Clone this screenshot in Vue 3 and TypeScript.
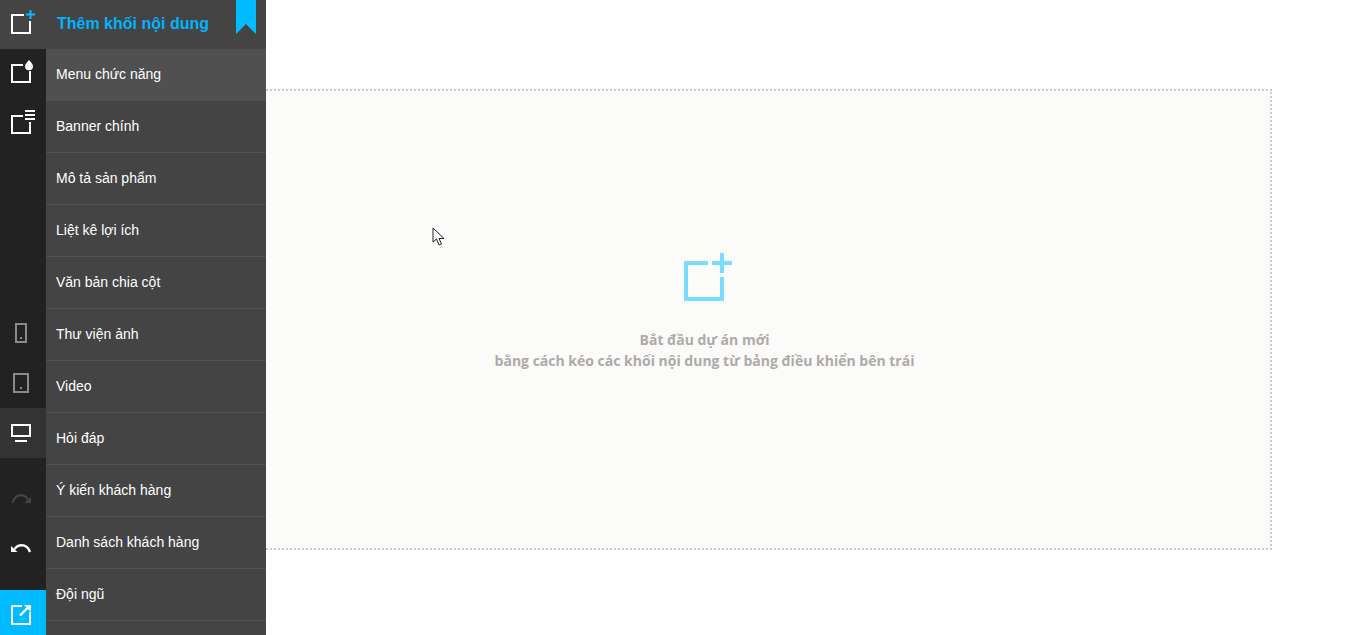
<script setup lang="ts">
const items: string[] = [
  'Menu chức năng',
  'Banner chính',
  'Mô tả sản phẩm',
  'Liệt kê lợi ích',
  'Văn bản chia cột',
  'Thư viện ảnh',
  'Video',
  'Hỏi đáp',
  'Ý kiến khách hàng',
  'Danh sách khách hàng',
  'Đội ngũ',
]
</script>

<template>
  <div class="app">
    <nav class="rail">
      <button class="rail-btn head">
        <svg width="46" height="49" viewBox="0 0 46 49" fill="none">
          <path d="M24 15H12V33H30V21" stroke="#fff" stroke-width="2" />
          <path d="M26 14.5H35M30.5 10V19" stroke="#00bbff" stroke-width="2" />
        </svg>
      </button>
      <button class="rail-btn">
        <svg width="46" height="50" viewBox="0 0 46 50" fill="none">
          <path d="M23 16H12V33H30V22" stroke="#fff" stroke-width="2" />
          <path d="M29 11C28 12.8 25 14.6 25 17.2A4 4 0 0 0 33 17.2C33 14.6 30 12.8 29 11Z" fill="#fff" />
        </svg>
      </button>
      <button class="rail-btn">
        <svg width="46" height="50" viewBox="0 0 46 50" fill="none">
          <path d="M23 17H12V34H30V23" stroke="#fff" stroke-width="2" />
          <path d="M25 12H35M25 16H35M25 20H35" stroke="#fff" stroke-width="2" />
        </svg>
      </button>

      <div class="device-group">
        <button class="rail-btn">
          <svg width="46" height="50" viewBox="0 0 46 50" fill="none">
            <rect x="16" y="16" width="10" height="18" stroke="#8a8a8a" stroke-width="2" />
            <rect x="20" y="29" width="2" height="2" fill="#8a8a8a" />
          </svg>
        </button>
        <button class="rail-btn">
          <svg width="46" height="50" viewBox="0 0 46 50" fill="none">
            <rect x="14" y="16" width="14" height="18" stroke="#8a8a8a" stroke-width="2" />
            <rect x="20" y="29" width="2" height="2" fill="#8a8a8a" />
          </svg>
        </button>
        <button class="rail-btn active">
          <svg width="46" height="50" viewBox="0 0 46 50" fill="none">
            <rect x="12" y="17" width="18" height="11" stroke="#fff" stroke-width="2" />
            <path d="M15 33H27" stroke="#fff" stroke-width="2" />
          </svg>
        </button>
      </div>

      <div class="history-group">
        <button class="rail-btn">
          <svg width="46" height="50" viewBox="0 0 46 50" fill="none">
            <path d="M12.5 30C14 25 17.5 22.2 21 22.2C24 22.2 26.5 24 28 26.5" stroke="#444" stroke-width="2.2" />
            <path d="M31 24V30H24.5Z" fill="#444" />
          </svg>
        </button>
        <button class="rail-btn">
          <svg width="46" height="50" viewBox="0 0 46 50" fill="none">
            <path d="M30 29C28.5 24.5 25 22.2 21.5 22.2C18.5 22.2 16 24 14.5 26" stroke="#fff" stroke-width="2.4" />
            <path d="M11 23V29H17.5Z" fill="#fff" />
          </svg>
        </button>
      </div>

      <button class="publish">
        <svg width="46" height="45" viewBox="0 0 46 45" fill="none">
          <path d="M22 16H12V34H30V22" stroke="#fff" stroke-width="2" />
          <path d="M20 25.5L28 17.5" stroke="#fff" stroke-width="2.4" />
          <path d="M24 15H31V22Z" fill="#fff" />
        </svg>
      </button>
    </nav>

    <aside class="panel">
      <header class="panel-head">
        <span class="panel-title">Thêm khối nội dung</span>
        <svg class="ribbon" width="20" height="34" viewBox="0 0 20 34">
          <path d="M0 0H20V34L10 24L0 34Z" fill="#00bbff" />
        </svg>
      </header>
      <ul class="list">
        <li v-for="(item, i) in items" :key="item" class="row" :class="{ hover: i === 0 }">{{ item }}</li>
      </ul>
    </aside>

    <main class="stage">
      <section class="canvas">
        <svg class="canvas-icon" width="48" height="48" viewBox="0 0 48 48" fill="none">
          <path d="M24 10H2V46H38V24" stroke="#7adcff" stroke-width="4" />
          <path d="M28 10H48M38 0V20" stroke="#7adcff" stroke-width="4" />
        </svg>
        <p class="hint">Bắt đầu dự án mới<br />bằng cách kéo các khối nội dung từ bảng điều khiển bên trái</p>
      </section>
    </main>

    <svg class="cursor" width="14" height="20" viewBox="0 0 14 20">
      <path d="M1 1V15L4.5 12L7 18L9.5 17L7 11.5H12Z" fill="#fff" stroke="#222" stroke-width="1" stroke-linejoin="round" />
    </svg>
  </div>
</template>

<style>
html, body { margin: 0; background: #fff; overflow: hidden; }
</style>

<style scoped>
.app {
  position: relative;
  display: flex;
  width: 1345px;
  height: 635px;
  overflow: hidden;
  background: #fff;
  font-family: "Liberation Sans", Arial, sans-serif;
}
button {
  display: block;
  padding: 0;
  border: 0;
  background: none;
}
svg { display: block; }
.rail {
  position: relative;
  z-index: 1;
  display: flex;
  flex: none;
  flex-direction: column;
  width: 46px;
  background: #222;
}
.rail-btn { width: 46px; height: 50px; flex: none; }
.rail-btn.head { height: 49px; background: #444; }
.rail-btn.active { background: #333; }
.device-group { margin-top: 159px; }
.history-group { margin-top: 15px; }
.publish { width: 46px; height: 45px; margin-top: auto; background: #00bbff; }
.panel {
  position: relative;
  z-index: 1;
  flex: none;
  width: 220px;
  background: #444;
  overflow: hidden;
}
.panel-head {
  position: relative;
  display: flex;
  align-items: center;
  box-sizing: border-box;
  height: 49px;
  padding: 0 0 2px 11px;
}
.panel-title {
  color: #00b4ff;
  font-size: 16px;
  font-weight: 700;
}
.ribbon { position: absolute; top: 0; right: 10px; }
.list { margin: 0; padding: 0; list-style: none; }
.row {
  box-sizing: border-box;
  height: 52px;
  padding: 0 0 0 10px;
  border-bottom: 1px solid #515151;
  color: #fff;
  font-size: 14px;
  line-height: 50px;
}
.row.hover { background: #505050; border-bottom: 0; }
.stage {
  flex: 1;
  padding-top: 89px;
}
.canvas {
  box-sizing: border-box;
  display: flex;
  flex-direction: column;
  align-items: center;
  width: 1135px;
  height: 461px;
  margin-left: -129px;
  padding-top: 162px;
  border: 2px dotted #ccc;
  background: #fbfbf9;
}
.canvas-icon { margin-left: 7px; }
.hint {
  margin: 28px 0 0;
  color: #aeaaa9;
  font-family: "Open Sans", sans-serif;
  font-size: 14px;
  font-weight: 700;
  line-height: 21px;
  text-align: center;
}
.cursor { position: absolute; left: 432px; top: 227px; }
</style>
